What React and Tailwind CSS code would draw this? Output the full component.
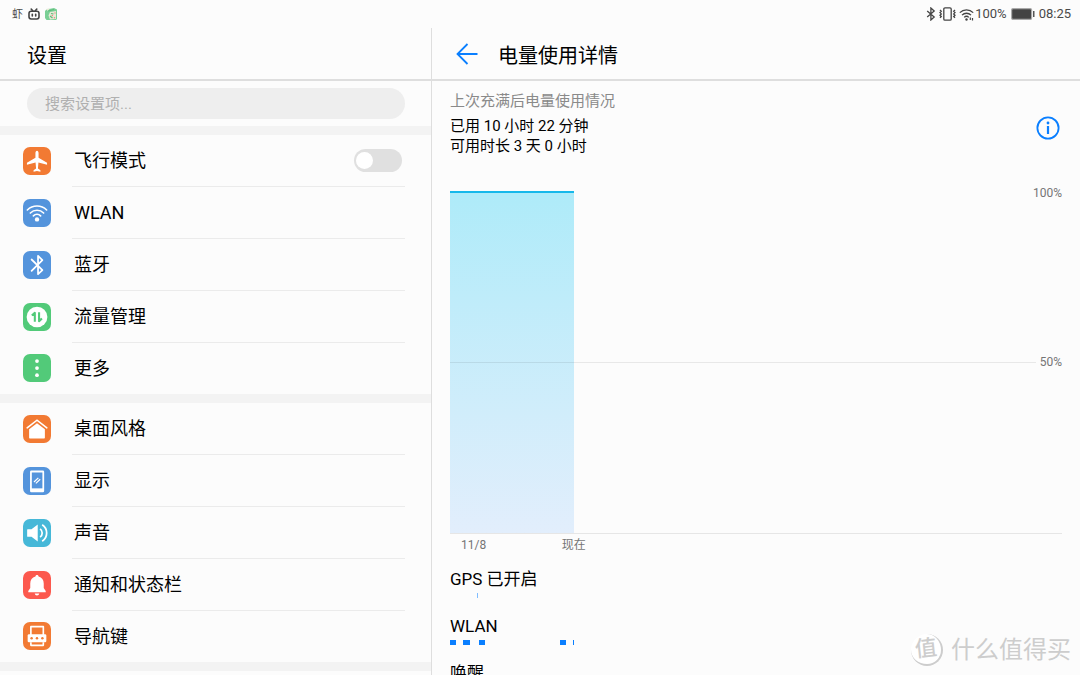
import { useState } from 'react'

const networkItems = [
  { id: 'flight', label: '飞行模式', tile: 'bg-[#f27a33]', icon: PlaneIcon, toggle: true },
  { id: 'wlan', label: 'WLAN', tile: 'bg-[#5494dc]', icon: WlanIcon },
  { id: 'bluetooth', label: '蓝牙', tile: 'bg-[#5494dc]', icon: BluetoothTileIcon },
  { id: 'data', label: '流量管理', tile: 'bg-[#52ca79]', icon: DataIcon },
  { id: 'more', label: '更多', tile: 'bg-[#52ca79]', icon: MoreIcon },
]

const deviceItems = [
  { id: 'home', label: '桌面风格', tile: 'bg-[#f27a33]', icon: HomeIcon },
  { id: 'display', label: '显示', tile: 'bg-[#5494dc]', icon: DisplayIcon },
  { id: 'sound', label: '声音', tile: 'bg-[#46b8d8]', icon: SoundIcon },
  { id: 'notify', label: '通知和状态栏', tile: 'bg-[#fc594e]', icon: BellIcon },
  { id: 'nav', label: '导航键', tile: 'bg-[#f27a33]', icon: NavKeyIcon },
]

// start and width are percentages of the time axis
const usedPercent = 20.2
const activity = [
  { label: 'GPS 已开启', color: 'bg-[#80bdff]', spans: [[4.4, 0.2]] },
  {
    label: 'WLAN',
    color: 'bg-[#0a7fff]',
    spans: [[0, 0.9], [2.1, 1.2], [4.7, 1.1], [17.9, 1], [20.1, 0.15]],
  },
  { label: '唤醒', color: 'bg-[#0a7fff]', spans: [] },
]

function PlaneIcon() {
  return (
    <svg viewBox="0 0 27 27" className="size-full" fill="#fff">
      <path d="M13.5 3.6c-.9 0-1.5 1-1.5 2.2v4.6l-8.2 4.8v2l8.3-2.3.5 5.8-2.4 1.8v1.4l3.3-.8 3.3.8v-1.4l-2.4-1.8.5-5.800 8.300 2.300v-2L15 10.400V5.800c0-1.200-.6-2.200-1.500-2.200z" />
    </svg>
  )
}

function WlanIcon() {
  return (
    <svg viewBox="0 0 27 27" className="size-full" fill="none" stroke="#fff" strokeWidth="1.6" strokeLinecap="round">
      <path d="M4.2 10.6a13.2 13.2 0 0 1 18.6 0M7.1 13.5a9.1 9.1 0 0 1 12.8 0M10 16.300a5 5 0 0 1 7 0" />
      <circle cx="13.5" cy="19.7" r="2.1" fill="#fff" stroke="none" />
    </svg>
  )
}

function BluetoothTileIcon() {
  return (
    <svg viewBox="0 0 27 27" className="size-full" fill="none" stroke="#fff" strokeWidth="1.7" strokeLinejoin="round" strokeLinecap="round">
      <path d="M8.3 8.2l10.400 10.200-4.200 4V4.600l4.200 4.200L8.300 19.200" />
    </svg>
  )
}

function DataIcon() {
  return (
    <svg viewBox="0 0 27 27" className="size-full">
      <circle cx="13.5" cy="13.5" r="10" fill="#fff" />
      <path d="M8.500 12l2.900-2.500V18M15.500 9v8.500l2.800-2.500" fill="none" stroke="#52ca79" strokeWidth="2" strokeLinejoin="round" />
    </svg>
  )
}

function MoreIcon() {
  return (
    <svg viewBox="0 0 27 27" className="size-full" fill="#fff">
      <circle cx="13.5" cy="6.8" r="1.8" />
      <circle cx="13.5" cy="13.6" r="1.8" />
      <circle cx="13.5" cy="20.4" r="1.8" />
    </svg>
  )
}

function HomeIcon() {
  return (
    <svg viewBox="0 0 27 27" className="size-full">
      <path d="M4 12.400L13.500 5l9.500 7.400" fill="none" stroke="#fff" strokeWidth="1.5" strokeLinecap="round" />
      <path d="M13.500 7.900l7.600 5.900v8.200a.7.700 0 0 1-.7.700H6.600a.7.700 0 0 1-.7-.7v-8.200z" fill="#fff" />
    </svg>
  )
}

function DisplayIcon() {
  return (
    <svg viewBox="0 0 27 27" className="size-full">
      <rect x="6.8" y="3.3" width="13.6" height="21" rx="1.2" fill="#fff" />
      <rect x="8.5" y="5.3" width="10.2" height="15.3" fill="#5494dc" />
      <path d="M10.600 14.500l4.200-4M12.400 15.800l4.200-4" stroke="#fff" strokeWidth="1.2" />
    </svg>
  )
}

function SoundIcon() {
  return (
    <svg viewBox="0 0 27 27" className="size-full">
      <path d="M4.500 9.800h3.700l6-4.600v16.600l-6-4.600H4.500a.5.500 0 0 1-.5-.5v-6.400a.5.500 0 0 1 .5-.5z" fill="#fff" />
      <path d="M16.500 9.500a5 5 0 0 1 0 8M18.500 5.600a9.400 9.400 0 0 1 0 15.800" fill="none" stroke="#fff" strokeWidth="1.7" />
    </svg>
  )
}

function BellIcon() {
  return (
    <svg viewBox="0 0 27 27" className="size-full" fill="#fff">
      <path d="M13.500 3.800c.9 0 1.500.6 1.500 1.400 3.300.8 5 3.400 5 6.800v4.500l1.900 2.700v1.300H5.100v-1.300L7 16.500V12c0-3.400 1.700-6 5-6.800 0-.8.600-1.400 1.500-1.400zM11.300 21.800h4.400c-.2 1.200-1.100 1.900-2.200 1.900s-2-.7-2.200-1.900z" />
    </svg>
  )
}

function NavKeyIcon() {
  return (
    <svg viewBox="0 0 27 27" className="size-full">
      <path d="M7.600 13V4.500h12V13M7.600 19.500v3h12v-3" fill="none" stroke="#fff" strokeWidth="1.6" strokeLinejoin="round" />
      <rect x="4.5" y="11.8" width="18" height="7.7" rx="1.2" fill="#fff" />
      <g fill="#f27a33">
        <circle cx="8.3" cy="15.6" r="1.2" />
        <circle cx="13.5" cy="15.6" r="1.2" />
        <circle cx="18.7" cy="15.6" r="1.2" />
      </g>
    </svg>
  )
}

function StatusBar() {
  return (
    <div className="flex h-7 shrink-0 items-center justify-between pl-3 pr-[9px] text-[13px] text-[#4a4a4a]">
      <div className="flex items-center gap-[5px]">
        <span className="text-[11px] leading-none">虾</span>
        <svg viewBox="0 0 12 12" className="size-3" fill="none" stroke="#444" strokeWidth="1.6" strokeLinecap="round">
          <rect x="1" y="3.2" width="10" height="7.8" rx="2.2" />
          <path d="M3.200 1l1.500 1.800M8.800 1L7.300 2.800M4.300 6.300v1.600M7.700 6.300v1.600" />
        </svg>
        <svg viewBox="0 0 12 12" className="size-3">
          <path d="M1.500 1.500L9 0l3 1.500V11l-1 1H1.500L0 10V3z" fill="#79cf95" />
          <path d="M1 1l4-.8-2 3zM5 4l6-1v8l-6 .5-1.500-4z" fill="#e6ead6" />
          <path d="M3 3l6-1.500M6 5.500l2.500.5M5 8l2.500 2" stroke="#5dbb7a" strokeWidth="1.2" />
          <circle cx="7.300" cy="7.500" r=".8" fill="#e98b83" />
          <circle cx="10" cy="5" r=".7" fill="#e98b83" />
          <circle cx="9.500" cy="9.700" r=".8" fill="#e98b83" />
        </svg>
      </div>
      <div className="flex items-center">
        <svg viewBox="0 0 10 14" className="mr-[3px] h-[14px] w-[10px]" fill="none" stroke="#444" strokeWidth="1.3">
          <path d="M1.200 4l7 6-3.300 3V1l3.300 3-7 6" />
        </svg>
        <svg viewBox="0 0 17 14" className="mr-[3px] h-[14px] w-[17px]" fill="none" stroke="#444" strokeWidth="1.3">
          <rect x="4.800" y=".8" width="7.400" height="12.400" rx="1.2" />
          <path d="M1 3l1.300 1.300L1 5.600l1.300 1.300L1 8.200l1.300 1.300L1 10.800M16 3l-1.300 1.300L16 5.600l-1.300 1.300L16 8.200l-1.300 1.300 1.300 1.300" />
        </svg>
        <svg viewBox="0 0 15 13" className="mr-px h-[13px] w-[15px]" fill="none" stroke="#444" strokeWidth="1.3">
          <path d="M.8 4.600a9.600 9.600 0 0 1 13.400 0M3 7.100a6.400 6.400 0 0 1 9 0M5.200 9.400a3.300 3.300 0 0 1 4.600 0" />
          <circle cx="7.5" cy="11.5" r="1.2" fill="#444" stroke="none" />
          <path d="M11.300 9.500v2.500M13.500 12.500V10" strokeWidth="1.2" />
        </svg>
        <span>100%</span>
        <svg viewBox="0 0 24 12" className="mx-1 h-3 w-6">
          <rect x=".6" y=".6" width="20" height="10.8" rx="1.5" fill="#444" stroke="#aaa" strokeWidth="1.2" />
          <rect x="22" y="3" width="1.5" height="6" fill="#555" />
        </svg>
        <span>08:25</span>
      </div>
    </div>
  )
}

function SettingsRow({ item }) {
  const [on, setOn] = useState(false)
  const Icon = item.icon

  return (
    <li className="group flex pl-[23px] pr-[26px]">
      <div className="flex w-[49px] shrink-0 items-center pb-px">
        <span className={`block size-7 overflow-hidden rounded-[7px] ${item.tile}`}>
          <Icon />
        </span>
      </div>
      <div className="flex flex-1 items-center border-b border-[#ebebeb] pl-[2px] group-last:border-b-0">
        {item.toggle ? (
          <>
            <label htmlFor={item.id} className="flex h-[51px] flex-1 items-center pt-px text-lg">
              {item.label}
            </label>
            <input
              id={item.id}
              type="checkbox"
              checked={on}
              onChange={(e) => setOn(e.target.checked)}
              className="mr-[3px] flex h-[23px] w-12 appearance-none items-center rounded-full bg-[#e0e0e0] px-[2px] before:block before:size-[17px] before:rounded-full before:bg-white checked:justify-end checked:bg-[#0a7fff]"
            />
          </>
        ) : (
          <button type="button" className="flex h-[51px] flex-1 items-center pt-px text-left text-lg">
            {item.label}
          </button>
        )}
      </div>
    </li>
  )
}

function SettingsPane() {
  const [query, setQuery] = useState('')

  return (
    <aside className="flex w-2/5 shrink-0 flex-col border-r border-[#dedede]">
      <header className="flex h-[53px] shrink-0 items-center border-b-2 border-[#dedede] pl-[27px] pt-1">
        <h1 className="text-xl">设置</h1>
      </header>
      <div className="py-[7px] pl-[27px] pr-[26px]">
        <input
          type="search"
          aria-label="搜索设置项"
          value={query}
          onChange={(e) => setQuery(e.target.value)}
          placeholder="搜索设置项..."
          className="block h-[31px] w-full rounded-full bg-[#eeeeee] px-[18px] text-[15px] outline-none placeholder:text-[#b0b0b0]"
        />
      </div>
      <ul className="border-t-[9px] border-[#f3f3f3]">
        {networkItems.map((item) => (
          <SettingsRow key={item.id} item={item} />
        ))}
      </ul>
      <ul className="border-y-[9px] border-[#f3f3f3]">
        {deviceItems.map((item) => (
          <SettingsRow key={item.id} item={item} />
        ))}
      </ul>
    </aside>
  )
}

function BatteryChart() {
  return (
    <div className="mt-[35px]">
      <div className="relative h-[343px] border-b border-[#e6e6e6]">
        <div
          className="h-full border-t-2 border-[#17b8ea] bg-linear-to-b from-[#aeebf9] to-[#e2eefc]"
          style={{ width: `${usedPercent}%` }}
        />
        <span className="absolute right-0 top-0.5 -translate-y-1/2 text-xs text-[#757575]">100%</span>
        <div className="absolute inset-x-0 top-1/2 flex -translate-y-1/2 items-center gap-1 text-xs text-[#757575]">
          <span className="h-px flex-1 bg-black/8" />
          <span>50%</span>
        </div>
      </div>
      <div
        className="mt-[3px] flex justify-between pl-[11px] text-xs text-[#757575]"
        style={{ width: `${usedPercent + 2}%` }}
      >
        <span>11/8</span>
        <span>现在</span>
      </div>
    </div>
  )
}

function ActivityRow({ label, color, spans }) {
  return (
    <li className="pb-4">
      <p className="text-[17px] leading-6">{label}</p>
      <div className="relative mt-[2px] h-[5px]">
        {spans.map(([start, width]) => (
          <span
            key={start}
            className={`absolute h-full ${color}`}
            style={{ left: `${start}%`, width: `${width}%` }}
          />
        ))}
      </div>
    </li>
  )
}

function BatteryPane() {
  return (
    <main className="flex min-w-0 flex-1 flex-col">
      <header className="flex h-[53px] shrink-0 items-center gap-5 border-b-2 border-[#dedede] pl-6 pt-1">
        <button type="button" aria-label="返回" className="pb-[3px]">
          <svg viewBox="0 0 22 22" className="size-[22px]" fill="none" stroke="#0a7fff" strokeWidth="1.8">
            <path d="M11.500 1L1.500 11l10 10M1.500 11H21.500" />
          </svg>
        </button>
        <h2 className="text-xl">电量使用详情</h2>
      </header>
      <div className="px-[18px] pt-[10px]">
        <p className="text-[15px] leading-5 text-[#8a8a8a]">上次充满后电量使用情况</p>
        <div className="mt-[5px] flex items-start justify-between">
          <p className="text-[15px] leading-5">
            已用 10 小时 22 分钟
            <br />
            可用时长 3 天 0 小时
          </p>
          <button type="button" aria-label="详细信息" className="mr-[2px]">
            <svg viewBox="0 0 24 24" className="size-6" fill="none" stroke="#0a7fff" strokeWidth="1.8">
              <circle cx="12" cy="12" r="10.6" />
              <path d="M12 10v8" strokeWidth="2.2" />
              <circle cx="12" cy="7" r="1.4" fill="#0a7fff" stroke="none" />
            </svg>
          </button>
        </div>
        <BatteryChart />
        <ul className="mt-[14px]">
          {activity.map((row) => (
            <ActivityRow key={row.label} {...row} />
          ))}
        </ul>
      </div>
    </main>
  )
}

function Watermark() {
  return (
    <div className="pointer-events-none absolute bottom-[9px] right-[9px] flex items-center gap-2 text-2xl text-[#cdcdcd]">
      <span className="flex size-8 items-center justify-center rounded-full border-b-2 border-r-2 border-[#cdcdcd] bg-white text-[22px] font-medium leading-none">
        <span className="-rotate-6">值</span>
      </span>
      <span>什么值得买</span>
    </div>
  )
}

export default function App() {
  return (
    <div className="relative flex h-screen flex-col overflow-hidden bg-[#fcfcfc] font-['Roboto','Noto_Sans_CJK_SC',sans-serif] text-black">
      <StatusBar />
      <div className="flex min-h-0 flex-1">
        <SettingsPane />
        <BatteryPane />
      </div>
      <Watermark />
    </div>
  )
}
